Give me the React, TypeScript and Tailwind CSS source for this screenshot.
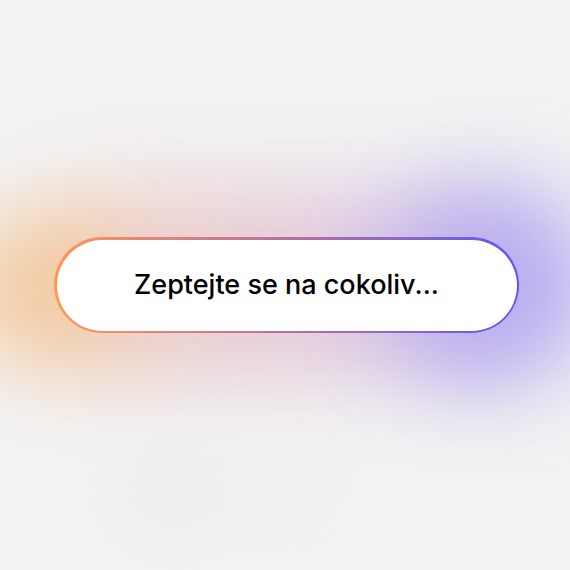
export default function App() {
  return (
    <div className="relative flex h-[570px] w-[570px] items-center justify-center overflow-hidden bg-[#f2f2f2]">
      {/* glow behind the input */}
      <div className="absolute left-[20px] top-[190px] h-[190px] w-[540px] rounded-full bg-gradient-to-r from-[#f5c9a8] via-[#e2c3d4] to-[#c2b8f2] opacity-80 blur-[40px]" />
      <div className="absolute left-[-40px] top-[215px] h-[150px] w-[150px] rounded-full bg-[#f4c590] opacity-70 blur-[40px]" />
      <div className="absolute left-[390px] top-[190px] h-[190px] w-[210px] rounded-full bg-[#aa9cf2] opacity-65 blur-[45px]" />
      {/* faint blurred shapes below */}
      <div className="absolute left-[120px] top-[445px] h-[90px] w-[110px] rounded-full bg-[#e9e9e9] opacity-50 blur-[20px]" />
      <div className="absolute left-[245px] top-[450px] h-[75px] w-[75px] rounded-full bg-[#ecebef] opacity-50 blur-[20px]" />

      <div className="relative ml-[3px] rounded-full bg-gradient-to-r from-[#ff9752] via-[#b86e9c] to-[#6450f0] p-[2.5px]">
        <div className="flex h-[91px] w-[460px] items-center justify-center rounded-full bg-white">
          <span className="font-['Inter',sans-serif] text-[27px] font-medium text-black">
            Zeptejte se na cokoliv...
          </span>
        </div>
      </div>
    </div>
  );
}
